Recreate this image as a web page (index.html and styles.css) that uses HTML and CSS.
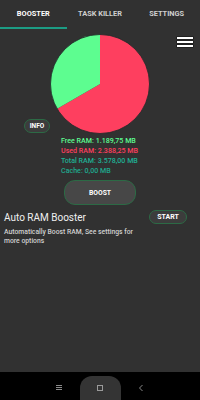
FILE: index.html
```html
<!DOCTYPE html>
<html>
<head>
<meta charset="utf-8">
<link rel="stylesheet" href="styles.css">
</head>
<body>
<div class="screen">
  <div class="tabs">
    <div class="tab active">BOOSTER</div>
    <div class="tab">TASK KILLER</div>
    <div class="tab">SETTINGS</div>
  </div>
  <div class="content">
    <div class="chart">
      <svg class="pie" width="100" height="100" viewBox="0 0 100 100">
        <path d="M50 50 L50 0.5 A49.5 49.5 0 1 1 7.13 74.75 Z" fill="#fe3f5f"/>
        <path d="M50 50 L50 0.5 A49.5 49.5 0 0 0 7.13 74.75 Z" fill="#5dfd90"/>
        <circle cx="50" cy="50" r="49.5" fill="none" stroke="#1e2a28" stroke-width="0.8"/>
      </svg>
      <div class="menu">
        <span></span><span></span><span></span>
      </div>
      <button class="pill info">INFO</button>
    </div>
    <div class="stats">
      <div class="free">Free RAM: 1.189,75 MB</div>
      <div class="used">Used RAM: 2.388,25 MB</div>
      <div class="total">Total RAM: 3.578,00 MB</div>
      <div class="cache">Cache: 0,00 MB</div>
    </div>
    <div class="boost-row">
      <button class="boost">BOOST</button>
    </div>
    <div class="auto">
      <div class="auto-text">
        <div class="auto-title">Auto RAM Booster</div>
        <div class="auto-desc">Automatically Boost RAM, See settings for more options</div>
      </div>
      <button class="pill start">START</button>
    </div>
  </div>
  <div class="navbar">
    <div class="nav-item">
      <svg width="8" height="8" viewBox="0 0 8 8"><path d="M1 1.5h6M1 3.5h6M1 5.5h6" stroke="#8a8a8a" stroke-width="1"/></svg>
    </div>
    <div class="nav-item home">
      <svg width="8" height="8" viewBox="0 0 8 8"><rect x="1.5" y="1.5" width="5" height="5" fill="none" stroke="#9a9a9a" stroke-width="1"/></svg>
    </div>
    <div class="nav-item">
      <svg width="8" height="8" viewBox="0 0 8 8"><path d="M5.5 1 L2.5 4 L5.5 7" fill="none" stroke="#8a8a8a" stroke-width="1"/></svg>
    </div>
  </div>
</div>
</body>
</html>
```

FILE: styles.css
```css
* { box-sizing: border-box; }
html, body {
  margin: 0;
  padding: 0;
  background: #313131;
}
body {
  width: 200px;
  height: 400px;
  overflow: hidden;
  font-family: Roboto, "Liberation Sans", sans-serif;
}
.screen {
  width: 200px;
  height: 400px;
  display: flex;
  flex-direction: column;
  background: #313131;
}
.tabs {
  display: flex;
  height: 29px;
  flex: none;
}
.tab {
  flex: 1;
  display: flex;
  align-items: center;
  justify-content: center;
  font-size: 7.4px;
  font-weight: 700;
  color: #cfcfcf;
  padding-bottom: 1px;
  border-bottom: 2px solid transparent;
}
.tab.active {
  color: #ffffff;
  border-bottom-color: #1c9c84;
}
.content {
  flex: 1;
  display: flex;
  flex-direction: column;
}
.chart {
  position: relative;
  display: flex;
  justify-content: center;
  padding-top: 5px;
}
.pie { display: block; }
.menu {
  position: absolute;
  top: 8px;
  right: 7px;
  width: 16px;
  display: flex;
  flex-direction: column;
  gap: 2.2px;
}
.menu span {
  display: block;
  height: 2px;
  background: #ffffff;
  box-shadow: 0 0 0 0.5px #111;
}
.pill {
  font-family: Roboto, "Liberation Sans", sans-serif;
  font-weight: 700;
  font-size: 6.5px;
  color: #ffffff;
  background: #3c3c3c;
  border: 1px solid #2c6a45;
  border-radius: 8px;
  padding: 0;
  display: flex;
  align-items: center;
  justify-content: center;
}
.info {
  position: absolute;
  left: 24px;
  top: 90px;
  width: 26px;
  height: 14px;
}
.stats {
  margin-top: 2px;
  padding-left: 61px;
  font-size: 7.1px;
  font-weight: 500;
  line-height: 10px;
}
.free { color: #5dfd90; }
.used { color: #fe3f5f; }
.total { color: #1fb094; }
.cache { color: #1fa88d; }
.boost-row {
  display: flex;
  justify-content: center;
  margin-top: 4px;
}
.boost {
  width: 72px;
  height: 25px;
  background: #474747;
  border: 1px solid #2c6a45;
  border-radius: 11px;
  color: #ffffff;
  font-family: Roboto, "Liberation Sans", sans-serif;
  font-weight: 700;
  font-size: 6.8px;
  padding: 0;
  margin-left: 0;
}
.auto {
  display: flex;
  justify-content: space-between;
  align-items: flex-start;
  margin-top: 5px;
  padding: 0 13px 0 4px;
}
.auto-text { width: 142px; }
.auto-title {
  margin-top: 2px;
  font-size: 10px;
  line-height: 12px;
  color: #f0f0f0;
}
.auto-desc {
  margin-top: 4px;
  font-size: 6.8px;
  line-height: 9px;
  font-weight: 500;
  color: #d0d0d0;
}
.start {
  width: 38px;
  height: 14px;
  font-size: 7px;
  flex: none;
}
.navbar {
  flex: none;
  height: 28px;
  background: #000000;
  display: flex;
  justify-content: center;
  align-items: flex-end;
  gap: 0;
}
.nav-item {
  width: 41px;
  height: 24px;
  display: flex;
  align-items: center;
  justify-content: center;
}
.home {
  background: #343434;
  border-radius: 12px 12px 0 0;
}
.nav-item svg { display: block; }
```
